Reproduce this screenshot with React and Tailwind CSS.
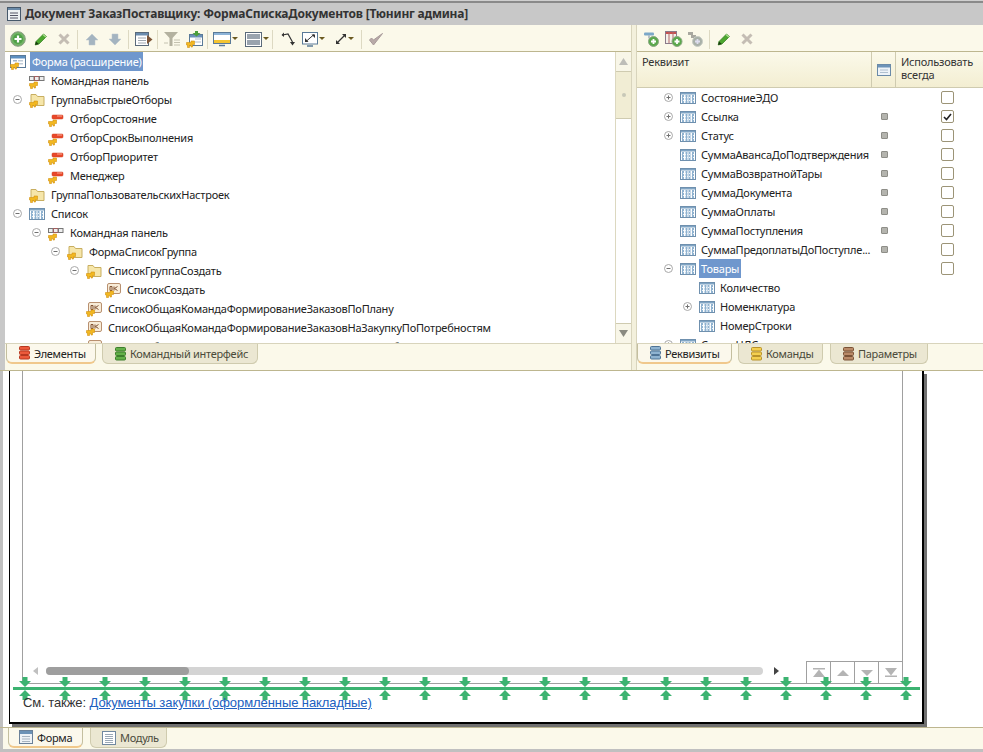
import React from 'react';

const Key = () => (<g><path d="M0.500 10.500H5V9h3.500v3.500H6.500V15H5v-1.500H3.500V15.500H1.500v-2.500H0.500z" fill="#f2b820" stroke="#d4920f" strokeWidth="0.600"/></g>);
const FormIco = () => (<svg width="16" height="16" viewBox="0 0 16 16" className="shrink-0"><rect x="0.500" y="1.500" width="15" height="12" fill="#fff" stroke="#5a7a98"/><rect x="1" y="2" width="14" height="2.500" fill="#5c8fc0"/><rect x="3" y="6" width="4" height="1.500" fill="#a0b4c8"/><rect x="8" y="6" width="5" height="1.500" fill="#c0ccd8"/><rect x="8" y="9" width="5" height="1.500" fill="#c0ccd8"/><Key/></svg>);
const Cmd = () => (<svg width="16" height="16" viewBox="0 0 16 16" className="shrink-0"><rect x="0.500" y="3.500" width="4.500" height="4" fill="#eee" stroke="#777"/><rect x="5.500" y="3.500" width="4.500" height="4" fill="#eee" stroke="#a06060"/><rect x="10.500" y="3.500" width="4.500" height="4" fill="#eee" stroke="#777"/><Key/></svg>);
const Folder = () => (<svg width="16" height="16" viewBox="0 0 16 16" className="shrink-0"><path d="M2 2.500h5l1.500 2H15v9H2z" fill="#f6e6aa" stroke="#c8ae60"/><Key/></svg>);
const Field = () => (<svg width="16" height="16" viewBox="0 0 16 16" className="shrink-0"><rect x="4" y="4" width="11" height="4" rx="1" fill="#e8482a" stroke="#d04020" strokeWidth="0.500"/><rect x="9" y="4.500" width="5" height="1" fill="#f8a898"/><Key/></svg>);
const Ok = () => (<svg width="16" height="16" viewBox="0 0 16 16" className="shrink-0"><rect x="2.500" y="1.500" width="13" height="10" rx="1.500" fill="#f8ecd8" stroke="#b89070"/><path d="M5 4.500h2v4H5zM9 4.500v4M12.500 4.500l-3 2 3 2" fill="none" stroke="#805030" strokeWidth="1"/><Key/></svg>);
const Tbl = () => (<svg width="16" height="16" viewBox="0 0 16 16" className="shrink-0"><rect x="0.500" y="2.500" width="15" height="11" fill="#fff" stroke="#6f90ae"/><rect x="1" y="3" width="14" height="1.500" fill="#7fa4c4"/><path d="M3 5v8M6.500 5v8M9.500 5v8M13 5v8" stroke="#8fb2d0" strokeWidth="2"/><path d="M1 7.500h14M1 10.500h14" stroke="#eef4f8" strokeDasharray="1 1"/></svg>);

const Exp = ({ minus }) => (<svg width="9" height="9" viewBox="0 0 9 9" className="shrink-0"><circle cx="4.500" cy="4.500" r="4" fill="#fff" stroke="#a8a8a8"/><path d={minus ? 'M2.500 4.500h4' : 'M2.500 4.500h4M4.500 2.500v4'} stroke="#707070"/></svg>);
const Caret = () => (<svg width="6" height="4" viewBox="0 0 6 4" className="ml-[1px] shrink-0"><path d="M0 0h6L3 3z" fill="#6b5a20"/></svg>);
const Sep = ({ cls }) => <div className={'w-px h-[19px] bg-[#ddd9c2] shrink-0 ' + cls} />;

const Add = ({ s = 16 }) => (<svg width={s} height={s} viewBox="0 0 16 16" className="shrink-0"><circle cx="8" cy="8" r="7.300" fill="#72b365" stroke="#8c9c84"/><circle cx="8" cy="8" r="5" fill="#4fa046"/><path d="M8 4.500v7M4.500 8h7" stroke="#fff" strokeWidth="2.200"/></svg>);
const Pencil = () => (<svg width="14" height="14" viewBox="0 0 14 14" className="shrink-0"><path d="M2 9.500 9.500 2l3 2.500-7.500 7.500-3.800 1z" fill="#4ca72f" stroke="#2f7d1c" strokeWidth="0.700"/><path d="M9.500 2l3 2.500 -1 1 -3-2.500z" fill="#a8dc8c"/><path d="M1.200 13l.8-3.500 2.800 2.600z" fill="#1a3a10"/></svg>);
const Cross = () => (<svg width="12" height="12" viewBox="0 0 12 12" className="shrink-0"><path d="M1.500 1.500l9 9M10.500 1.500l-9 9" stroke="#c4bdb4" strokeWidth="3"/></svg>);
const Up = () => (<svg width="14" height="13" viewBox="0 0 14 13" className="shrink-0"><path d="M7 1l6 6H10v5H4V7H1z" fill="#a4b4c0" stroke="#b8c4cc" strokeWidth="0.500"/></svg>);
const Down = () => (<svg width="14" height="13" viewBox="0 0 14 13" className="shrink-0"><path d="M7 12l6-6H10V1H4v5H1z" fill="#a4b4c0" stroke="#b8c4cc" strokeWidth="0.500"/></svg>);
const FormArrow = () => (<svg width="18" height="16" viewBox="0 0 18 16" className="shrink-0"><rect x="0.500" y="1.500" width="13" height="13" fill="#fff" stroke="#5a6a7a"/><rect x="1" y="2" width="12" height="2.500" fill="#6a8cae"/><path d="M3 7h8M3 9.500h8M3 12h8" stroke="#a0a8b0"/><path d="M12 4l5.500 4.500L12 13z" fill="#7c5436"/></svg>);
const Funnel = () => (<svg width="18" height="17" viewBox="0 0 18 17" className="shrink-0"><path d="M1 1h14L9.500 7v8h-3V7z" fill="#b4b2a0"/><path d="M11 9h6M11 11.500h6M11 14h6M1 12h4" stroke="#c4c2b0"/></svg>);
const FormGreen = () => (<svg width="18" height="17" viewBox="0 0 18 17" className="shrink-0"><rect x="3.500" y="3.500" width="13" height="11" fill="#fff" stroke="#5a7a98"/><rect x="4" y="4" width="12" height="2.500" fill="#6a90b8"/><path d="M9 8h6M9 11h6" stroke="#b0bcc8"/><path d="M9 0h3v2h2.500l-4 3.500-4-3.500H9z" fill="#4a9e3a"/><path d="M0.500 11.500H5V10h3.500v3.500H6.500V16H5v-1.500H3.500V16.500H1.500v-2.500H0.500z" fill="#f2b820" stroke="#d4920f" strokeWidth="0.600"/></svg>);
const Monitor = () => (<svg width="18" height="16" viewBox="0 0 18 16" className="shrink-0"><rect x="0.500" y="1.500" width="17" height="11" fill="#fff" stroke="#5a7a98"/><rect x="1" y="9" width="16" height="3" fill="#f4c430"/><rect x="1" y="2" width="16" height="2" fill="#8cb4d8"/><path d="M6 14.500h6" stroke="#5a7a98" strokeWidth="1.500"/></svg>);
const Layout2 = () => (<svg width="17" height="15" viewBox="0 0 17 15" className="shrink-0"><rect x="0.500" y="0.500" width="16" height="14" fill="#fff" stroke="#5a6a7a"/><rect x="2" y="2" width="13" height="5" fill="#9aa4ae"/><rect x="2" y="8" width="13" height="5" fill="#9aa4ae"/></svg>);
const Branch = () => (<svg width="14" height="16" viewBox="0 0 14 16" className="shrink-0"><path d="M1.500 4 7 3l4.500 8" fill="none" stroke="#333" strokeWidth="1.200"/><path d="M3 1.500 0.500 4 3 6z" fill="#333"/><path d="M9 11h5l-2.500 3.500z" fill="#333"/></svg>);
const Expand = () => (<svg width="16" height="15" viewBox="0 0 16 15" className="shrink-0"><rect x="0.500" y="0.500" width="15" height="11.500" fill="#fff" stroke="#5a7a98"/><path d="M4 9.500l8-7" stroke="#333"/><path d="M9.500 2.500H13V6zM3 6v4h3.500z" fill="#333"/><path d="M5 14h6" stroke="#5a7a98" strokeWidth="1.500"/></svg>);
const Arrows = () => (<svg width="12" height="12" viewBox="0 0 12 12" className="shrink-0"><path d="M2.500 9.500l7-7" stroke="#333" strokeWidth="1.200"/><path d="M7 1h4v4zM1 7v4h4z" fill="#333"/></svg>);
const Check = () => (<svg width="16" height="15" viewBox="0 0 16 15" className="shrink-0"><path d="M1.500 8l4 5 9-11.500-9 6.500-2-2z" fill="#b8aaa8" stroke="#a89a9a"/></svg>);

const AddField = () => (<svg width="16" height="16" viewBox="0 0 16 16" className="shrink-0"><rect x="1" y="1.500" width="10" height="3" rx="1" fill="#7ca8c8"/><path d="M6 4.500v3" stroke="#7a8a9a"/><circle cx="10.500" cy="10.500" r="5" fill="#5aa84c" stroke="#8ca884"/><path d="M10.500 8v5M8 10.500h5" stroke="#fff" strokeWidth="1.800"/></svg>);
const AddTbl = () => (<svg width="18" height="16" viewBox="0 0 18 16" className="shrink-0"><rect x="0.500" y="0.500" width="11" height="12" fill="#f4f0ea" stroke="#8a7a8a"/><rect x="1" y="1" width="10" height="2" fill="#c85050"/><path d="M4 1v11M8 1v11" stroke="#b06868"/><circle cx="12" cy="10.500" r="5" fill="#5aa84c" stroke="#8ca884"/><path d="M12 8v5M9.500 10.500h5" stroke="#fff" strokeWidth="1.800"/></svg>);
const AddGray = () => (<svg width="16" height="16" viewBox="0 0 16 16" className="shrink-0"><path d="M1 1h5v3h3v3H4V4H1z" fill="#a8a8a0"/><circle cx="10.500" cy="10.500" r="5" fill="#a8b0a8" stroke="#c8ccc4"/><path d="M10.500 8v5M8 10.500h5" stroke="#dde" strokeWidth="1.800"/></svg>);

const TabIco = ({ c1, c2 }) => (<svg width="11" height="14" viewBox="0 0 11 14" className="shrink-0">{[0.5, 5, 9.500].map((y) => <rect key={y} x="0.500" y={y} width="10" height="3.500" rx="1" fill={c1} stroke={c2} />)}</svg>);
const FormTab = () => (<svg width="14" height="14" viewBox="0 0 14 14" className="shrink-0"><rect x="0.500" y="0.500" width="13" height="13" fill="#eef2f6" stroke="#6a8098"/><rect x="1" y="1" width="12" height="3" fill="#6c92b6"/><path d="M3 6.500h8M3 9h8M3 11.500h8" stroke="#a8b4c0"/></svg>);
const ModTab = () => (<svg width="14" height="14" viewBox="0 0 14 14" className="shrink-0"><rect x="0.500" y="0.500" width="13" height="13" fill="#fff" stroke="#7088a0"/><path d="M3 3.500h8M3 5.500h8M3 7.500h8M3 9.500h8M3 11.500h8" stroke="#9aa8b6"/></svg>);

const Tab = ({ icon, label, active, cls }) => (
  <div className={'h-[20px] flex items-center gap-[4px] rounded-b-[6px] border border-t-0 shrink-0 tracking-[-0.3px] ' + (active ? 'bg-[#fbf8ec] border-[#c4bf9f] border-b-2 border-b-[#f0c88c] text-[#222] ' : 'bg-[#ebe7d2] border-[#cfcbae] text-[#4a4a3a] ') + cls}>
    {icon}<span>{label}</span>
  </div>
);

const left = [
  { x: 'ml-[5px]', ic: <FormIco />, t: 'Форма (расширение)', sel: true },
  { x: 'ml-[24px]', ic: <Cmd />, t: 'Командная панель' },
  { x: 'ml-[24px]', e: 'ml-[8px]', ic: <Folder />, t: 'ГруппаБыстрыеОтборы' },
  { x: 'ml-[43px]', ic: <Field />, t: 'ОтборСостояние' },
  { x: 'ml-[43px]', ic: <Field />, t: 'ОтборСрокВыполнения' },
  { x: 'ml-[43px]', ic: <Field />, t: 'ОтборПриоритет' },
  { x: 'ml-[43px]', ic: <Field />, t: 'Менеджер' },
  { x: 'ml-[24px]', ic: <Folder />, t: 'ГруппаПользовательскихНастроек' },
  { x: 'ml-[24px]', e: 'ml-[8px]', ic: <Tbl />, t: 'Список' },
  { x: 'ml-[43px]', e: 'ml-[27px]', ic: <Cmd />, t: 'Командная панель' },
  { x: 'ml-[62px]', e: 'ml-[46px]', ic: <Folder />, t: 'ФормаСписокГруппа' },
  { x: 'ml-[81px]', e: 'ml-[65px]', ic: <Folder />, t: 'СписокГруппаСоздать' },
  { x: 'ml-[100px]', ic: <Ok />, t: 'СписокСоздать' },
  { x: 'ml-[81px]', ic: <Ok />, t: 'СписокОбщаяКомандаФормированиеЗаказовПоПлану' },
  { x: 'ml-[81px]', ic: <Ok />, t: 'СписокОбщаяКомандаФормированиеЗаказовНаЗакупкуПоПотребностям' },
  { x: 'ml-[81px]', ic: <Ok />, t: 'СписокОбщаяКомандаФормированиеЗаказовПоПотребностям' },
];

const right = [
  { t: 'СостояниеЭДО', e: true },
  { t: 'Ссылка', e: true, sq: true, ck: true },
  { t: 'Статус', e: true, sq: true },
  { t: 'СуммаАвансаДоПодтверждения', sq: true },
  { t: 'СуммаВозвратнойТары', sq: true },
  { t: 'СуммаДокумента', sq: true },
  { t: 'СуммаОплаты', sq: true },
  { t: 'СуммаПоступления', sq: true },
  { t: 'СуммаПредоплатыДоПоступле...', sq: true },
  { t: 'Товары', e: 'minus', sel: true },
  { t: 'Количество', sub: true, nock: true },
  { t: 'Номенклатура', sub: true, e: true, nock: true },
  { t: 'НомерСтроки', sub: true, nock: true },
  { t: 'СуммаНДС', e: true, nock: true },
];

const Marker = ({ down }) => (
  <svg width="12" height="10" viewBox="0 0 12 10" className="shrink-0">
    <path d={down ? 'M3.500 0h5v4H12L6 10 0 4h3.500z' : 'M3.500 10h5V6H12L6 0 0 6h3.500z'} fill="#3cb371" />
  </svg>
);
const markers = Array.from({ length: 23 }, (_, i) => i);

const Pager = ({ children, cls }) => <div className={'w-[24px] h-full flex items-center justify-center ' + cls}>{children}</div>;

export default function App() {
  return (
    <div className="w-[983px] h-[752px] overflow-hidden flex flex-col bg-white text-[11px] leading-none tracking-[-0.22px] text-[#222]" style={{ fontFamily: '"Noto Sans","Liberation Sans",sans-serif' }}>
      <div className="h-[3px] shrink-0 bg-[#8a8a8a] border-t border-[#d0d0d0]" />
      <div className="h-[22px] shrink-0 bg-[#c8c8c8] flex items-center pl-[7px]">
        <svg width="14" height="14" viewBox="0 0 14 14" className="shrink-0"><rect x="0.500" y="0.500" width="13" height="13" fill="#eef1f4" stroke="#46586a"/><rect x="1" y="1" width="12" height="2" fill="#6a8aa8"/><path d="M3 6h8M3 8.500h8M3 11h8" stroke="#556"/></svg>
        <span className="ml-[4px] font-bold text-[#333] text-[12px] whitespace-nowrap tracking-[-0.2px]">Документ ЗаказПоставщику: ФормаСпискаДокументов [Тюнинг админа]</span>
      </div>

      <div className="h-[346px] shrink-0 flex bg-[#fbf9ea] border-b border-[#bdb68f]">
        <div className="w-[5px] bg-[#c8c8c8] shrink-0" />
        <div className="w-[626px] shrink-0 flex flex-col">
          <div className="h-[27px] shrink-0 flex items-center pt-[2px] border-b border-[#bdb68f]">
            <div className="ml-[5px]"><Add s={16} /></div>
            <div className="ml-[8px]"><Pencil /></div>
            <div className="ml-[10px]"><Cross /></div>
            <Sep cls="ml-[7px]" />
            <div className="ml-[7px]"><Up /></div>
            <div className="ml-[9px]"><Down /></div>
            <Sep cls="ml-[6px]" />
            <div className="ml-[6px]"><FormArrow /></div>
            <Sep cls="ml-[4px]" />
            <div className="ml-[5px]"><Funnel /></div>
            <div className="ml-[5px]"><FormGreen /></div>
            <Sep cls="ml-[3px]" />
            <div className="ml-[5px] flex items-center"><Monitor /><Caret /></div>
            <div className="ml-[7px] flex items-center"><Layout2 /><Caret /></div>
            <Sep cls="ml-[3px]" />
            <div className="ml-[8px]"><Branch /></div>
            <div className="ml-[7px] flex items-center"><Expand /><Caret /></div>
            <div className="ml-[10px] flex items-center"><Arrows /><Caret /></div>
            <Sep cls="ml-[7px]" />
            <div className="ml-[6px]"><Check /></div>
          </div>
          <div className="h-[291px] shrink-0 flex bg-white overflow-hidden">
            <div className="flex-1 min-w-0 overflow-hidden">
              {left.map((r, i) => (
                <div key={i} className="h-[19px] flex items-center relative whitespace-nowrap">
                  {r.e && <div className={'absolute left-0 ' + r.e}><Exp minus /></div>}
                  <div className={r.x}>{r.ic}</div>
                  {r.sel
                    ? <span className="ml-[4px] h-[19px] w-[113px] px-[2px] flex items-center bg-[#6f97cd] text-white">{r.t}</span>
                    : <span className="ml-[6px]">{r.t}</span>}
                </div>
              ))}
            </div>
            <div className="w-[16px] shrink-0 bg-[#f8f6e8] border-l border-[#dcd8c0] flex flex-col">
              <div className="h-[20px] border-b border-[#cfcbb0] flex items-center justify-center"><svg width="9" height="7" viewBox="0 0 9 7"><path d="M4.500 0 9 7H0z" fill="#bdbdb8"/></svg></div>
              <div className="h-[47px] bg-[#f1edd4] border-b border-[#cfcbb0] flex items-center justify-center"><div className="w-[4px] h-[4px] rounded-full bg-[#c8c8b8]" /></div>
              <div className="flex-1 bg-white" />
              <div className="h-[20px] border-t border-[#cfcbb0] flex items-center justify-center"><svg width="9" height="7" viewBox="0 0 9 7"><path d="M4.500 7 9 0H0z" fill="#8a8a80"/></svg></div>
            </div>
          </div>
          <div className="flex-1 flex pl-[1px] border-t border-[#d8d4bc]">
            <Tab active icon={<TabIco c1="#ec5a3c" c2="#b83820" />} label="Элементы" cls="w-[90px] pl-[12px]" />
            <Tab icon={<TabIco c1="#63b04a" c2="#3c7e2c" />} label="Командный интерфейс" cls="w-[156px] ml-[6px] pl-[12px]" />
          </div>
        </div>
        <div className="w-[6px] shrink-0 bg-[#f3f0dc] border-x border-[#d8d4bc]" />
        <div className="flex-1 min-w-0 flex flex-col">
          <div className="h-[27px] shrink-0 flex items-center pt-[2px] border-b border-[#bdb68f]">
            <div className="ml-[6px]"><AddField /></div>
            <div className="ml-[6px]"><AddTbl /></div>
            <div className="ml-[4px]"><AddGray /></div>
            <Sep cls="ml-[6px]" />
            <div className="ml-[7px]"><Pencil /></div>
            <div className="ml-[10px]"><Cross /></div>
          </div>
          <div className="h-[36px] shrink-0 flex border-b border-[#cfcbb0] bg-gradient-to-b from-[#fbf9ea] to-[#f3eed2] text-[#333]">
            <div className="w-[235px] border-r border-[#cfcbb0] pl-[5px] pt-[4px]">Реквизит</div>
            <div className="w-[24px] border-r border-[#cfcbb0] flex items-center justify-center">
              <svg width="14" height="12" viewBox="0 0 14 12"><rect x="0.500" y="0.500" width="13" height="11" fill="#eef3f8" stroke="#6a8aa8"/><rect x="1" y="1" width="12" height="2.500" fill="#6d93b8"/><path d="M3 6h8M3 8.500h8" stroke="#b0c0d0" /></svg>
            </div>
            <div className="flex-1 pl-[5px] pt-[3px] leading-[13px]">Использовать<br />всегда</div>
          </div>
          <div className="h-[255px] shrink-0 bg-white overflow-hidden">
            {right.map((r, i) => (
              <div key={i} className="h-[19px] flex items-center relative whitespace-nowrap">
                {r.e && <div className={'absolute ' + (r.sub ? 'left-[46px]' : 'left-[27px]')}><Exp minus={r.e === 'minus'} /></div>}
                <div className={r.sub ? 'ml-[62px]' : 'ml-[43px]'}><Tbl /></div>
                {r.sel
                  ? <span className="ml-[3px] px-[2px] h-[19px] flex items-center bg-[#6f97cd] text-white">{r.t}</span>
                  : <span className="ml-[5px]">{r.t}</span>}
                {r.sq && <div className="absolute left-[244px] w-[7px] h-[7px] bg-[#b4b4ae] border border-[#8e8e88] rounded-[1px]" />}
                {!r.nock && (
                  <div className="absolute left-[304px] w-[13px] h-[13px] bg-white border border-[#9c9477] rounded-[2px] flex items-center justify-center">
                    {r.ck && <svg width="9" height="8" viewBox="0 0 9 8"><path d="M1 4l2.500 2.500L8 1" fill="none" stroke="#222" strokeWidth="1.600"/></svg>}
                  </div>
                )}
              </div>
            ))}
          </div>
          <div className="flex-1 flex border-t border-[#d8d4bc]">
            <Tab active icon={<TabIco c1="#8fb3d0" c2="#4f7496" />} label="Реквизиты" cls="w-[95px] pl-[12px]" />
            <Tab icon={<TabIco c1="#f4cf50" c2="#b8922a" />} label="Команды" cls="w-[85px] ml-[6px] pl-[12px]" />
            <Tab icon={<TabIco c1="#b98a68" c2="#7a5236" />} label="Параметры" cls="w-[98px] ml-[7px] pl-[12px]" />
          </div>
        </div>
      </div>

      <div className="h-[356px] shrink-0 flex bg-white">
        <div className="w-[3px] bg-[#c0c0c0] shrink-0" />
        <div className="w-[6px] shrink-0" />
        <div className="w-[915px] h-[353px] shrink-0 border-l border-r-[2px] border-b-2 border-black shadow-[3px_3px_0_#707070] bg-white flex flex-col">
          <div className="h-[313px] shrink-0 ml-[12px] w-[881px] border-l border-r border-b border-[#a0a0a0] flex flex-col justify-end relative">
            <div className="h-[22px] flex items-end">
              <div className="flex-1 h-[16px] flex items-center pb-[8px]">
                <svg width="5" height="8" viewBox="0 0 5 8" className="ml-[10px] shrink-0"><path d="M5 0v8L0 4z" fill="#c0c0c0"/></svg>
                <div className="ml-[8px] w-[717px] h-[8px] rounded-full bg-[#d4d4d4]">
                  <div className="w-[143px] h-[8px] rounded-full bg-[#9e9e9e]" />
                </div>
                <svg width="5" height="8" viewBox="0 0 5 8" className="ml-[11px] shrink-0"><path d="M0 0v8l5-4z" fill="#444"/></svg>
              </div>
              <div className="w-[96px] h-[22px] flex border-t border-[#a0a0a0] shrink-0">
                <Pager cls="border-l border-[#a0a0a0]"><svg width="12" height="9" viewBox="0 0 12 9"><path d="M0 0h12v1.500H0zM6 1.500 12 9H0z" fill="#b4b4b4"/></svg></Pager>
                <Pager cls="border-l border-[#a0a0a0]"><svg width="12" height="6" viewBox="0 0 12 6"><path d="M6 0l6 6H0z" fill="#b4b4b4"/></svg></Pager>
                <Pager cls="border-l border-[#a0a0a0]"><svg width="12" height="6" viewBox="0 0 12 6"><path d="M6 6l6-6H0z" fill="#b4b4b4"/></svg></Pager>
                <Pager cls="border-l border-[#a0a0a0]"><svg width="12" height="9" viewBox="0 0 12 9"><path d="M0 7.500h12V9H0zM6 7.500 12 0H0z" fill="#b4b4b4"/></svg></Pager>
              </div>
            </div>
          </div>
          <div className="mt-[-7px] relative ml-[9px] w-[893px] h-[10px] flex justify-between shrink-0">
            {markers.map((i) => <Marker key={i} down />)}
          </div>
          <div className="h-[3px] ml-[3px] w-[907px] bg-[#3cb371] shrink-0" />
          <div className="ml-[9px] w-[893px] h-[10px] flex justify-between shrink-0">
            {markers.map((i) => <Marker key={i} />)}
          </div>
          <div className="ml-[13px] mt-[-4px] text-[13px] leading-[14px] tracking-[-0.08px] text-[#333] whitespace-nowrap" style={{ fontFamily: '"Liberation Sans",sans-serif' }}>
            См. также: <span className="text-[#2060c0] underline">Документы закупки (оформленные накладные)</span>
          </div>
        </div>
      </div>

      <div className="flex-1 flex bg-[#fbf9ea] border-t border-[#bdb68f] relative">
        <div className="w-[3px] bg-[#c0c0c0] shrink-0" />
        <div className="flex pl-[5px] h-[20px]">
          <Tab active icon={<FormTab />} label="Форма" cls="w-[75px] pl-[10px]" />
          <Tab icon={<ModTab />} label="Модуль" cls="w-[77px] ml-[7px] pl-[11px]" />
        </div>
      </div>
      <div className="h-[3px] shrink-0 bg-[#c0c0c0]" />
    </div>
  );
}
